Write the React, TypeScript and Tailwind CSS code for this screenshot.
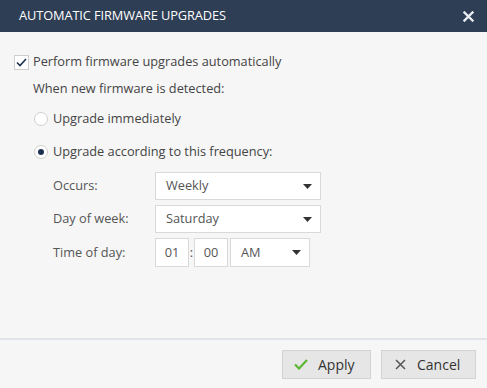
import React from 'react';

function Caret() {
  return (
    <svg width="9" height="5" viewBox="0 0 9 5" className="shrink-0">
      <path d="M0 0 H9 L4.5 5 Z" fill="#333" />
    </svg>
  );
}

function Select({ value, width }: { value: string; width: string }) {
  return (
    <div className={`${width} h-full flex items-center justify-between border border-[#d9d9d9] bg-white pl-[10px] pr-[8px] text-[#555]`}>
      <span>{value}</span>
      <Caret />
    </div>
  );
}

export default function App() {
  const font = { fontFamily: '"Open Sans", "Noto Sans", sans-serif' };

  return (
    <div className="w-[487px] h-[388px] flex flex-col bg-[#f6f6f6] text-[12.75px] text-[#444]" style={font}>
      {/* Header */}
      <div className="h-8 shrink-0 bg-[#2e3e55] flex items-center justify-between pl-[19px] pr-[13px]">
        <span className="text-white text-[12.8px] tracking-[-0.1px]">AUTOMATIC FIRMWARE UPGRADES</span>
        <svg width="11" height="11" viewBox="0 0 11 11">
          <path d="M1.5 1.5 L9.5 9.5 M9.5 1.5 L1.5 9.5" stroke="#e8ecf2" strokeWidth="2.4" strokeLinecap="square" />
        </svg>
      </div>

      {/* Body */}
      <div className="flex-1 pt-5 pl-[14px]">
        <div className="h-5 flex items-center gap-[4px]">
          <div className="w-[15px] h-[15px] border border-[#cfcfcf] bg-white flex items-center justify-center">
            <svg width="11" height="9" viewBox="0 0 11 9">
              <path d="M1 4.5 L4 7.5 L10 1" stroke="#1e3050" strokeWidth="1.6" fill="none" />
            </svg>
          </div>
          <span>Perform firmware upgrades automatically</span>
        </div>

        <div className="h-5 flex items-center mt-[7px] pl-[19px]">When new firmware is detected:</div>

        <div className="h-5 flex items-center gap-[5px] mt-[10px] pl-5">
          <div className="w-[14px] h-[14px] rounded-full border border-[#cfcfcf] bg-white" />
          <span>Upgrade immediately</span>
        </div>

        <div className="h-5 flex items-center gap-[5px] mt-[13px] pl-5">
          <div className="w-[14px] h-[14px] rounded-full border border-[#cfcfcf] bg-white flex items-center justify-center">
            <div className="w-[6px] h-[6px] rounded-full bg-[#1e3050]" />
          </div>
          <span>Upgrade according to this frequency:</span>
        </div>

        <div className="pl-[39px] mt-[10px] flex flex-col gap-[5px] text-[#555]">
          <div className="h-7 flex items-center">
            <span className="w-[102px]">Occurs:</span>
            <Select value="Weekly" width="w-[166px]" />
          </div>
          <div className="h-7 flex items-center">
            <span className="w-[102px]">Day of week:</span>
            <Select value="Saturday" width="w-[166px]" />
          </div>
          <div className="h-[29px] flex items-center">
            <span className="w-[102px]">Time of day:</span>
            <div className="w-[34px] h-full border border-[#d9d9d9] bg-white flex items-center justify-center">01</div>
            <span className="w-[5px] text-center">:</span>
            <div className="w-[34px] h-full border border-[#d9d9d9] bg-white flex items-center justify-center">00</div>
            <div className="ml-[2px] h-full">
              <Select value="AM" width="w-[80px]" />
            </div>
          </div>
        </div>
      </div>

      {/* Footer */}
      <div className="h-[50px] shrink-0 border-t-2 border-[#e1e5ea] flex items-center justify-end gap-[10px] pr-[11px] pt-[1px]">
        <button className="w-[89px] h-[29px] bg-[#e6e6e6] border border-[#d3d3d3] flex items-center pl-[11px] gap-[10px] text-[#333] text-[14px]">
          <svg width="14" height="11" viewBox="0 0 14 11">
            <path d="M1 5.5 L5 9.5 L13 1" stroke="#5cb832" strokeWidth="2.2" fill="none" />
          </svg>
          <span>Apply</span>
        </button>
        <button className="w-[95px] h-[29px] bg-[#e6e6e6] border border-[#d3d3d3] flex items-center pl-[13px] gap-[11px] text-[#333] text-[14px]">
          <svg width="11" height="11" viewBox="0 0 11 11">
            <path d="M1 1 L10 10 M10 1 L1 10" stroke="#555" strokeWidth="1.5" />
          </svg>
          <span>Cancel</span>
        </button>
      </div>
    </div>
  );
}
